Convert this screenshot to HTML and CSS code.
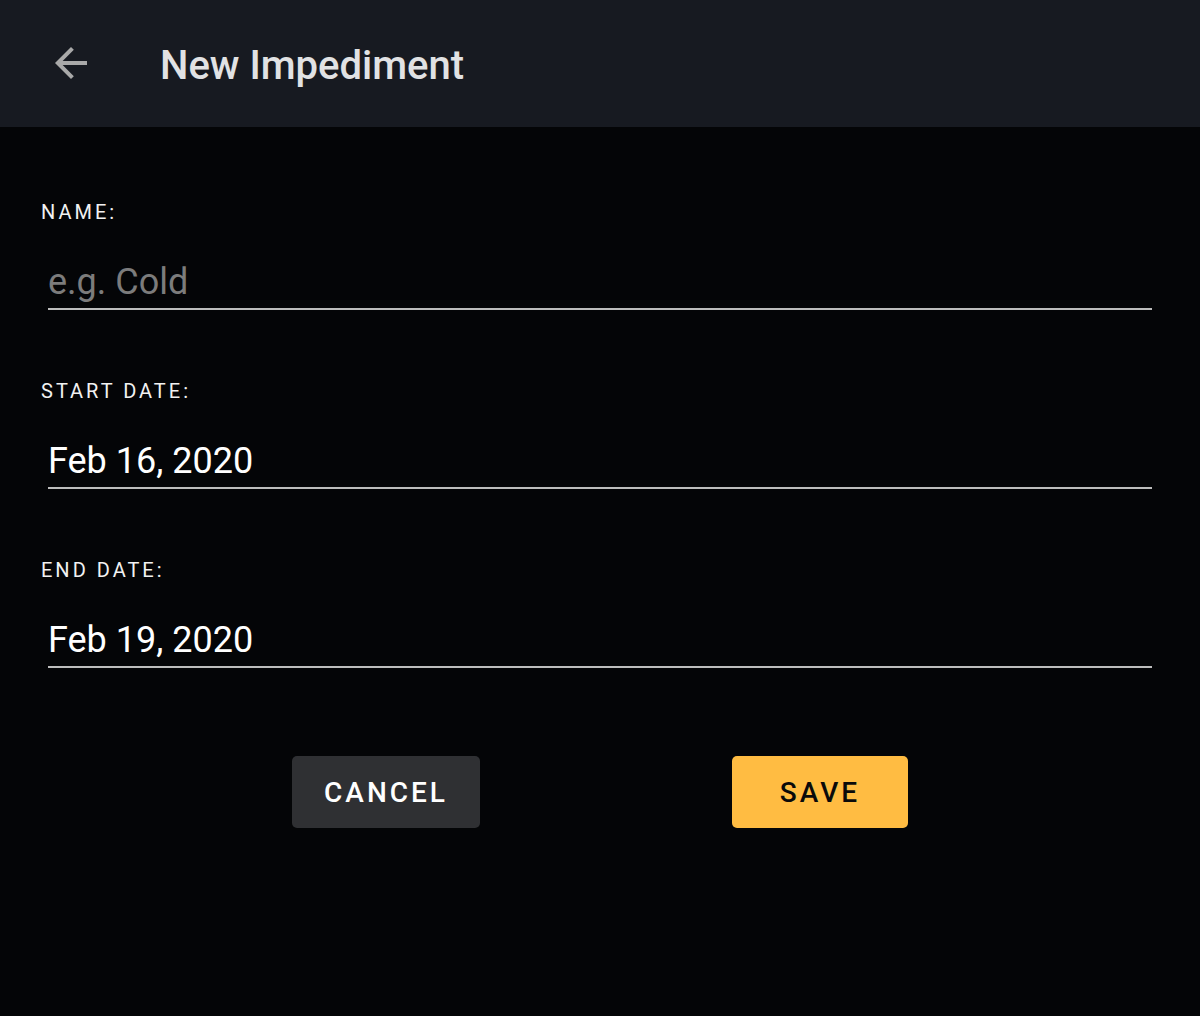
FILE: index.html
```html
<!DOCTYPE html>
<html>
<head>
<meta charset="utf-8">
<link rel="stylesheet" href="styles.css">
</head>
<body>
<header class="appbar">
  <button class="back" aria-label="Back">
    <svg width="48" height="48" viewBox="0 0 24 24"><path fill="#a9a9a9" d="M20 11H7.83l5.59-5.59L12 4l-8 8 8 8 1.41-1.41L7.83 13H20v-2z"/></svg>
  </button>
  <h1 class="title">New Impediment</h1>
</header>
<main class="form">
  <div class="field">
    <label class="label">NAME:</label>
    <div class="input placeholder">e.g. Cold</div>
  </div>
  <div class="field">
    <label class="label">START DATE:</label>
    <div class="input">Feb 16, 2020</div>
  </div>
  <div class="field">
    <label class="label">END DATE:</label>
    <div class="input">Feb 19, 2020</div>
  </div>
  <div class="actions">
    <button class="btn cancel">CANCEL</button>
    <button class="btn save">SAVE</button>
  </div>
</main>
</body>
</html>
```
FILE: styles.css
```css
html, body {
  margin: 0;
  padding: 0;
  background: #040507;
  font-family: Roboto, "Noto Sans", sans-serif;
  height: 100%;
}
.appbar {
  height: 127px;
  background: #171a21;
  display: flex;
  align-items: center;
  box-sizing: border-box;
  padding-left: 47px;
}
.back {
  background: none;
  border: none;
  padding: 0;
  width: 48px;
  height: 48px;
  display: flex;
  margin-top: -2px;
}
.title {
  margin: 0 0 0 65px;
  font-size: 40px;
  font-weight: 500;
  color: #e1e2e4;
  line-height: 48px;
  padding-top: 4px;
}
.form {
  padding: 73px 48px 0 48px;
}
.field {
  margin-bottom: 69px;
}
.label {
  display: block;
  margin-left: -7px;
  font-size: 20px;
  letter-spacing: 3px;
  color: #f2f2f2;
  line-height: 24px;
}
.input {
  margin-top: 36px;
  font-size: 36px;
  line-height: 44px;
  color: #ffffff;
  padding: 0 0 4px 0;
  border-bottom: 2px solid #bdbdbd;
}
.input.placeholder {
  color: #7c7c7c;
}
.actions {
  display: flex;
  justify-content: center;
  gap: 252px;
  margin-top: 88px;
}
.btn {
  height: 72px;
  border: none;
  border-radius: 5px;
  font-family: Roboto, "Noto Sans", sans-serif;
  font-size: 28px;
  font-weight: 500;
  letter-spacing: 3px;
  padding: 0;
}
.cancel {
  width: 188px;
  background: #2f3033;
  color: #ffffff;
}
.save {
  width: 176px;
  background: #ffbc42;
  color: #0a0a0a;
}
```
